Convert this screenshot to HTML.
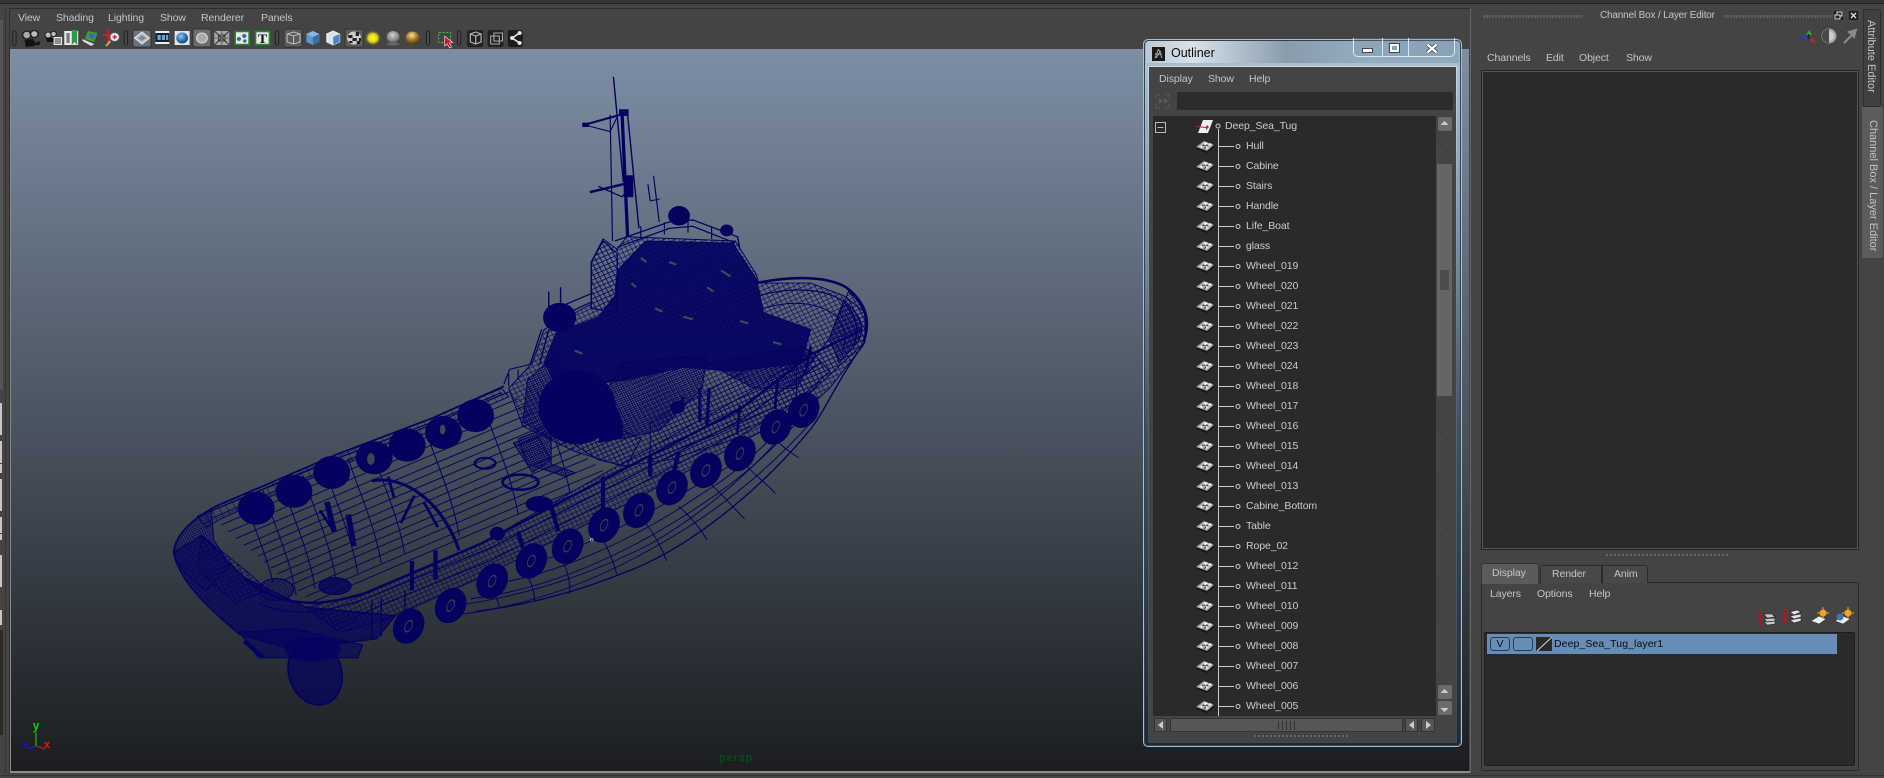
<!DOCTYPE html>
<html><head><meta charset="utf-8"><title>Maya</title>
<style>
html,body{margin:0;padding:0;background:#444;}
#p{position:relative;width:1884px;height:778px;overflow:hidden;background:#444;font:10.5px/14px "Liberation Sans",sans-serif;color:#c2c6ca;letter-spacing:-.1px;}
.a{position:absolute;}
.t{position:absolute;white-space:nowrap;}
.row{position:absolute;left:1246px;white-space:nowrap;line-height:20px;height:20px;color:#c6ccd2;}
.v{writing-mode:vertical-rl;white-space:nowrap;position:absolute;color:#c4c4c4;font-size:11px;letter-spacing:0;}
svg{position:absolute;display:block;}
</style></head><body><div id="p">

<!-- left strip and chrome -->
<div class="a" style="left:0;top:0;width:1884px;height:3px;background:#363636"></div>
<div class="a" style="left:0;top:3px;width:1884px;height:1px;background:#222"></div>
<div class="a" style="left:0;top:20px;width:3px;height:370px;background:#555"></div>
<div class="a" style="left:0;top:403px;width:2px;height:32px;background:#c8c8c8"></div>
<div class="a" style="left:0;top:441px;width:2px;height:22px;background:#c8c8c8"></div>
<div class="a" style="left:0;top:464px;width:2px;height:9px;background:#c8c8c8"></div>
<div class="a" style="left:0;top:479px;width:2px;height:32px;background:#c8c8c8"></div>
<div class="a" style="left:0;top:517px;width:2px;height:16px;background:#c8c8c8"></div>
<div class="a" style="left:0;top:534px;width:2px;height:6px;background:#c8c8c8"></div>
<div class="a" style="left:0;top:555px;width:2px;height:32px;background:#c8c8c8"></div>
<div class="a" style="left:0;top:610px;width:2px;height:15px;background:#c8c8c8"></div>
<div class="a" style="left:0;top:630px;width:3px;height:105px;background:#2a2a2a"></div>
<div class="a" style="left:5px;top:8px;width:1px;height:765px;background:#333"></div>
<div class="a" style="left:9px;top:8px;width:1461px;height:1px;background:#2e2e2e"></div>
<div class="a" style="left:9px;top:8px;width:1px;height:765px;background:#303030"></div>
<div class="a" style="left:1470px;top:8px;width:1px;height:765px;background:#666"></div>

<!-- viewport -->
<div class="a" style="left:11px;top:49px;width:1458px;height:722px;background:linear-gradient(#7d8ea5,#1b1d20)"></div>
<div class="a" style="left:10px;top:49px;width:1px;height:723px;background:#8a8a8a"></div>
<div class="a" style="left:10px;top:771px;width:1460px;height:2px;background:#8c8c8c"></div>
<div class="a" style="left:0;top:775px;width:1884px;height:1px;background:#333"></div>

<!-- menu -->
<span class="t" style="left:18px;top:11px">View</span>
<span class="t" style="left:56px;top:11px">Shading</span>
<span class="t" style="left:108px;top:11px">Lighting</span>
<span class="t" style="left:160px;top:11px">Show</span>
<span class="t" style="left:201px;top:11px">Renderer</span>
<span class="t" style="left:261px;top:11px">Panels</span>

<!-- toolbar -->
<svg style="left:0;top:0" width="560" height="52" viewBox="0 0 560 52">
<defs>
<radialGradient id="gb" cx=".4" cy=".35" r=".7"><stop offset="0" stop-color="#9cc6ee"/><stop offset=".6" stop-color="#2e6fb0"/><stop offset="1" stop-color="#123a66"/></radialGradient>
<radialGradient id="gy"><stop offset="0" stop-color="#ffff30"/><stop offset=".55" stop-color="#d6d610"/><stop offset="1" stop-color="#444" stop-opacity="0"/></radialGradient>
<radialGradient id="gg" cx=".45" cy=".35" r=".7"><stop offset="0" stop-color="#d0d0d0"/><stop offset=".7" stop-color="#808080"/><stop offset="1" stop-color="#444" stop-opacity=".6"/></radialGradient>
<radialGradient id="go" cx=".45" cy=".3" r=".75"><stop offset="0" stop-color="#f6e3a8"/><stop offset=".5" stop-color="#a67a24"/><stop offset="1" stop-color="#3a2a10"/></radialGradient>
</defs>
<g transform="scale(1.0714 1)">
<g fill="#4a4a4a" stroke="#222"><rect x="12" y="31" width="3" height="14" rx="1.5"/><rect x="116" y="31" width="3" height="14" rx="1.5"/><rect x="257" y="31" width="3" height="14" rx="1.5"/><rect x="398" y="31" width="3" height="14" rx="1.5"/><rect x="427" y="31" width="3" height="14" rx="1.5"/></g>
<circle cx="25" cy="35" r="4" fill="#aaa" stroke="#222" stroke-width="1.5"/><circle cx="32" cy="34" r="3.6" fill="#bbb" stroke="#222" stroke-width="1.5"/><path d="M23 40l8-1 2 4 4-2v4l-4 0-1 1-8 1z" fill="#111"/>
<circle cx="45" cy="35" r="3" fill="#bbb" stroke="#222"/><circle cx="50" cy="34" r="2.6" fill="#bbb" stroke="#222"/><path d="M43 38h8v4h-7z" fill="#111"/><rect x="50" y="37" width="8" height="8" fill="#e8e8e8"/><path d="M51 39h6M51 41h6M51 43h6" stroke="#333"/>
<rect x="60" y="31" width="13" height="14" fill="#e8e8e8"/><rect x="62" y="33" width="3" height="10" fill="#777"/><path d="M67 30h5v15l-2.500-3-2.500 3z" fill="#2f9a4c"/>
<path d="M82 31l9 2-3 9-9-3z" fill="#3f9a3a"/><path d="M84 33l5 2-2 4-4-2z" fill="#3b62c0"/><path d="M77 39l11 5-3 2-8-5z" fill="#ddd"/>
<path d="M101 29v14M96 35h11" stroke="#c81f24" stroke-width="2"/><circle cx="107" cy="37" r="4.500" fill="#e8e8e8" stroke="#555"/><path d="M105 37h4M107 35v4" stroke="#c81f24" stroke-width="1.300"/><path d="M103 41l-4 5" stroke="#c9a25a" stroke-width="2"/>
<rect x="124" y="30" width="17" height="17" rx="2" fill="#66727f" stroke="#333"/><path d="M132.500 32l7 6-7 6-7-6z" fill="#b9c1c8" stroke="#e4e4e4"/><path d="M132.500 35l4 3-4 3-4-3z" fill="#7e8a96"/>
<rect x="145" y="31" width="13" height="13" fill="#eee"/><rect x="145" y="33" width="13" height="9" fill="#123"/><rect x="147" y="35" width="3" height="5" fill="#6aa5dc"/><rect x="151" y="35" width="3" height="5" fill="#6aa5dc"/><rect x="155" y="35" width="2" height="5" fill="#6aa5dc"/>
<rect x="163" y="31" width="14" height="14" fill="#e4e4e4"/><circle cx="170" cy="38" r="5.500" fill="url(#gb)"/>
<rect x="180" y="29" width="17" height="18" rx="2" fill="#6c6c6c" stroke="#303030"/><circle cx="188.500" cy="38" r="5" fill="#aaa" stroke="#ddd"/>
<rect x="200" y="31" width="14" height="14" fill="#a8a8a8"/><path d="M200 31l14 14M214 31l-14 14M204 35h6v6h-6z" stroke="#333" fill="none"/><path d="M207 31v14M200 38h14" stroke="#666"/>
<rect x="219.500" y="31.500" width="13" height="13" fill="#e8e8e8" stroke="#1c8a2e" stroke-width="1.500"/><circle cx="223" cy="39" r="2" fill="#2a6aa8"/><circle cx="228" cy="36" r="2" fill="#2a6aa8"/><circle cx="228.500" cy="41" r="1.600" fill="#2a6aa8"/>
<rect x="238.500" y="31.500" width="13" height="13" fill="#e8e8e8" stroke="#1c8a2e" stroke-width="1.500"/><text x="245" y="43" font-family="Liberation Serif,serif" font-size="13" font-weight="700" fill="#111" text-anchor="middle">T</text>
<rect x="265" y="29" width="17" height="18" rx="2" fill="#5b5b5b" stroke="#333"/><path d="M268 34l6-2 6 2v8l-6 2-6-2zM268 34l6 2 6-2M274 36v8" fill="none" stroke="#bbb"/>
<path d="M286 34l6-3 6 3v8l-6 3-6-3z" fill="#5f96cf"/><path d="M292 37l6-3v8l-6 3z" fill="#3c6ea4"/><path d="M286 34l6-3 6 3-6 3z" fill="#8ab6e2"/>
<path d="M305 34l6-3 6 3v8l-6 3-6-3z" fill="#d9e4ee" stroke="#eee"/><path d="M311 37l6-3v8l-6 3z" fill="#4e86c0"/>
<rect x="322" y="29" width="17" height="18" rx="2" fill="#5b5b5b" stroke="#333"/><circle cx="330.500" cy="38" r="6.500" fill="#ccc"/><path d="M325 35h4v3h-4zM332 32h3v4h-3zM329 38h4v3h-4zM335 38h2v3h-2zM326 41h3v2h-3zM333 41h3v3h-3z" fill="#222"/>
<circle cx="348" cy="38" r="8" fill="url(#gy)"/>
<circle cx="367" cy="37" r="6" fill="url(#gg)"/><ellipse cx="367" cy="44" rx="6" ry="1.500" fill="#666"/>
<circle cx="385" cy="38" r="6.500" fill="url(#go)"/>
<rect x="409.500" y="32.500" width="11" height="10" fill="none" stroke="#29d13c" stroke-dasharray="2 1.500"/><path d="M415 36l0 10 2.500-2 2 4 2-1-2-4 3-.5z" fill="#c8202a" stroke="#fff" stroke-width=".5"/>
<rect x="436" y="30" width="15" height="17" rx="2" fill="#222"/><path d="M439 34l5-2 5 2v8l-5 2-5-2zM439 34l5 2 5-2M444 36v8" fill="none" stroke="#b5b5b5" stroke-width="1.100"/>
<rect x="455" y="30" width="15" height="17" rx="2" fill="#222"/><rect x="458" y="36" width="8" height="8" fill="none" stroke="#aaa"/><rect x="461" y="33" width="8" height="8" fill="none" stroke="#aaa"/>
<rect x="474" y="30" width="14" height="17" rx="2" fill="#1c1c1c"/><path d="M485 33l-7 5 7 5" fill="none" stroke="#e6e6e6" stroke-width="1.500"/><circle cx="478" cy="38" r="2" fill="#e6e6e6"/><circle cx="485" cy="33" r="2" fill="#e6e6e6"/><circle cx="485" cy="43" r="2" fill="#e6e6e6"/>
</g>
</svg>

<!-- ship -->
<svg style="left:0;top:0" width="1884" height="778" viewBox="0 0 1884 778">
<defs>
<pattern id="m" width="5" height="5" patternUnits="userSpaceOnUse" patternTransform="rotate(-24)"><path d="M0 0h5M0 0v5" stroke="#03035f" stroke-width="2.800" fill="none"/></pattern>
<pattern id="m2" width="10" height="10" patternUnits="userSpaceOnUse" patternTransform="rotate(-26)"><path d="M0 0h10M0 0v10" stroke="#03035f" stroke-width="2.600" fill="none"/></pattern>
<pattern id="m3" width="16" height="20" patternUnits="userSpaceOnUse" patternTransform="rotate(-26)"><path d="M0 0h16M0 0v20" stroke="#03035f" stroke-width="2.200" fill="none"/></pattern>
<clipPath id="deck"><path d="M120 1075L400 935 600 850 750 775 820 740 990 965 700 1150 460 1265 330 1300 200 1190z"/></clipPath>
<path id="dl" d="M120 1075Q440 920 750 775"/>
<path id="cr" d="M200 1040C215 1100 255 1190 270 1290"/>
<g id="tire"><ellipse rx="31" ry="42" fill="#03035f" transform="rotate(20)"/><ellipse rx="9" ry="17" fill="#333f4d" transform="rotate(20)"/><ellipse rx="5" ry="11" fill="#03035f" transform="rotate(20)"/></g>
<circle id="it" r="38" fill="#03035f"/>
</defs>
<g transform="translate(150 60) scale(.47194 .4209)" fill="none" stroke="#03035f" stroke-width="2.200">
<!-- hull lower -->
<path d="M690 1310C800 1295 900 1265 1000 1220C1150 1160 1300 1010 1390 890C1430 840 1450 770 1515 670" stroke-width="3"/>
<path d="M620 1300C780 1280 930 1225 1060 1150C1200 1060 1320 930 1400 810"/>
<path d="M700 1250C870 1225 1040 1130 1170 1030C1260 970 1340 880 1420 760"/>
<path d="M800 1200C950 1150 1100 1050 1250 950"/>
<path d="M640 1320C860 1290 1010 1200 1140 1110C1250 1030 1330 950 1410 850"/>
<path d="M680 1280C860 1255 1020 1165 1150 1070C1260 990 1340 910 1415 800"/>
<path d="M870 1180C885 1210 890 1240 890 1268M800 1225C810 1250 815 1265 815 1285M730 1270C740 1290 740 1300 740 1300M960 1140C975 1170 985 1205 990 1225M1050 1100C1070 1130 1085 1160 1095 1190M1120 1060C1150 1090 1170 1120 1180 1140M1190 1010C1220 1040 1240 1070 1260 1090M1260 960C1285 990 1310 1010 1325 1030M1325 900C1340 920 1360 935 1375 945"/>
<!-- deck -->
<path d="M50 1170C55 1120 100 1085 140 1060L400 935 600 850 750 775" stroke-width="4"/>
<path d="M100 1085L400 945 600 860 745 790" stroke-width="3"/>
<path d="M100 1085L140 1060 400 935 600 850 745 780 760 800 600 880 400 965 150 1090 120 1110z" fill="url(#m3)"/>
<g clip-path="url(#deck)">
<use href="#dl" transform="translate(12 13)"/><use href="#dl" transform="translate(30 30)"/><use href="#dl" transform="translate(46 46)"/><use href="#dl" transform="translate(62 62)"/><use href="#dl" transform="translate(78 78)"/><use href="#dl" transform="translate(94 90)"/><use href="#dl" transform="translate(108 104)"/><use href="#dl" transform="translate(122 118)"/><use href="#dl" transform="translate(136 132)"/><use href="#dl" transform="translate(150 146)"/><use href="#dl" transform="translate(164 160)"/><use href="#dl" transform="translate(178 172)"/><use href="#dl" transform="translate(194 186)"/><use href="#dl" transform="translate(210 200)"/><use href="#dl" transform="translate(226 212)"/>
<use href="#cr"/><use href="#cr" transform="translate(40 -17)"/><use href="#cr" transform="translate(80 -34)"/><use href="#cr" transform="translate(125 -52)"/><use href="#cr" transform="translate(170 -72)"/><use href="#cr" transform="translate(220 -94)"/><use href="#cr" transform="translate(270 -115)"/><use href="#cr" transform="translate(385 -160)"/><use href="#cr" transform="translate(510 -210)"/><use href="#cr" transform="translate(620 -260)"/>
</g>
<!-- bulwark band -->
<path d="M330 1300L460 1265 700 1150 990 965 1270 790 1400 690 1440 740 1300 880 1000 1060 720 1220 500 1330 400 1360z" fill="url(#m2)"/>
<path d="M200 1230C260 1290 340 1310 460 1265L700 1150 990 980 1250 830 1400 700 1510 640" stroke-width="6"/>
<path d="M230 1290C300 1330 400 1310 500 1260L720 1160 1000 1000 1260 850 1420 720" stroke-width="3"/>
<path d="M400 1340L500 1290 720 1190 1000 1030 1270 870" stroke-width="2.500"/>
<!-- stern -->
<path d="M50 1170C60 1235 120 1300 190 1365L300 1400 480 1375 520 1320 330 1300 200 1230 110 1130z" fill="#03035f" fill-opacity=".45" stroke-width="3"/>
<path d="M50 1170C60 1235 120 1300 190 1365L300 1400 480 1375 520 1320 330 1300 200 1230 110 1130z" fill="url(#m)"/>
<path d="M50 1170C55 1120 100 1085 130 1070L135 1140 170 1200 120 1260C80 1230 55 1200 50 1170z" fill="url(#m)"/>
<path d="M110 1130L200 1210 250 1260 180 1290 100 1210z" fill="url(#m2)"/>
<ellipse cx="268" cy="1258" rx="36" ry="26" fill="url(#m)" stroke-width="3"/>
<ellipse cx="392" cy="1250" rx="34" ry="20" fill="#03035f" fill-opacity=".8" stroke-width="3"/>
<path d="M190 1360L230 1420 300 1420 440 1420 450 1390 300 1350z" fill="#03035f" fill-opacity=".6" stroke-width="3"/>
<path d="M200 1380l40 40" stroke-width="10"/>
<ellipse cx="350" cy="1455" rx="56" ry="78" transform="rotate(-12 350 1455)" fill="#03035f" fill-opacity=".45" stroke-width="4"/>
<ellipse cx="350" cy="1455" rx="56" ry="78" transform="rotate(-12 350 1455)" fill="url(#m)"/>
<ellipse cx="345" cy="1400" rx="60" ry="30" fill="#03035f" fill-opacity=".85" stroke="none"/>
<!-- superstructure -->
<path d="M935 480L960 425 990 450 1010 420 1240 430 1285 510 1290 530 1400 530 1470 560 1515 600 1515 670 1400 790 1240 900 1100 950 1000 965 900 930 790 870 760 780 810 720 835 640 935 580z" fill="url(#m2)"/>
<path d="M1285 530C1350 515 1430 510 1475 540C1510 570 1530 610 1512 670" stroke-width="6"/>
<path d="M1290 560C1350 540 1430 540 1470 575C1495 600 1505 640 1490 680" stroke-width="3"/>
<path d="M1300 590C1360 570 1420 575 1455 610C1470 630 1480 660 1465 700"/>
<path d="M1480 550C1510 580 1530 620 1510 680L1440 780 1400 820 1375 760 1440 660z" fill="url(#m2)"/>
<path d="M1470 570C1500 600 1520 630 1500 670L1460 720 1440 660z" fill="url(#m)"/>
<path d="M990 500L1050 430 1235 435 1285 520 1300 600 1400 640 1380 720 1240 740 1130 730 1010 760 940 770 870 790 835 720 860 650 950 610 985 560z" fill="#03035f" fill-opacity=".92"/>
<path d="M1040 470l12 10M1100 480l15 6M1210 500l20 14M1180 540l14 10M1020 530l10 10M1070 590l16 8M1130 610l20 6M900 690l16 8M1250 620l18 6M1320 670l18 6" stroke="#3b4a5c" stroke-width="5"/>
<path d="M935 480L960 430 990 460 990 600 935 590z" fill="url(#m2)" stroke-width="3"/>
<path d="M1000 720L1180 700 1170 780 1080 880 1000 900 960 800z" fill="url(#m)"/>
<path d="M800 760L860 700 900 800 850 900 790 860z" fill="url(#m)"/>
<ellipse cx="905" cy="825" rx="82" ry="88" fill="#03035f" stroke="none"/>
<path d="M920 770C980 790 1010 840 1000 900L950 910C960 860 950 810 920 770z" fill="#03035f" stroke="none"/>
<path d="M850 870L850 960 900 980 880 990 800 960 780 900z" fill="url(#m)"/>
<path d="M880 900L950 950 1010 965 1040 900 1000 880z" fill="url(#m2)"/>
<path d="M1060 860L1290 720 1370 720 1370 800 1200 890 1060 950z" fill="url(#m2)"/>
<path d="M1180 720L1380 680 1410 700 1370 780 1280 780z" fill="url(#m)"/>
<path d="M1165 780l0 80M1185 780l-5 90M1130 800l-10 40" stroke-width="7"/>
<circle cx="1118" cy="825" r="14" fill="#03035f"/>
<path d="M1400 680l-10 60M1330 760l-6 70M1250 820l-6 70" stroke-width="6"/>
<!-- rails / masts -->
<path d="M985 430L1100 385 1150 380 1245 420 1250 450M990 445L1100 400 1150 395 1240 435" stroke-width="3"/>
<path d="M1040 395v30M1090 385v30M1140 380v30M1190 395v30" stroke-width="2.500"/>
<circle cx="1121" cy="370" r="22" fill="#03035f"/><circle cx="1222" cy="405" r="13" fill="#03035f"/>
<path d="M982 40L1003 290" stroke-width="3"/><path d="M1000 120L1012 420" stroke-width="7"/><path d="M1012 130L1036 400" stroke-width="3"/><path d="M975 130L980 430" stroke-width="2.500"/>
<path d="M920 154L1010 126" stroke-width="5"/><path d="M920 154L975 170 990 135" stroke-width="2.500"/><rect x="917" y="150" width="12" height="8" fill="#03035f"/><rect x="995" y="118" width="18" height="14" fill="#03035f"/>
<path d="M932 314L1022 290" stroke-width="6"/><path d="M950 300L1000 325 1020 300" stroke-width="3"/><rect x="1005" y="275" width="18" height="50" fill="#03035f"/>
<path d="M1067 275L1079 385M1055 295L1060 335M1060 335L1080 330" stroke-width="2.500"/>
<path d="M845 550v50M870 540v60M840 600L935 555M850 620L935 575" stroke-width="3"/><circle cx="868" cy="612" r="34" fill="#03035f"/><path d="M750 770L762 735 810 722M760 745v30M780 735v25" stroke-width="2.500"/>
<path d="M830 640L805 725M845 640L825 725" stroke-width="3"/>
<!-- inner deck items -->
<use href="#it" x="225" y="1065"/><use href="#it" x="305" y="1025"/><use href="#it" x="385" y="980"/><use href="#it" x="475" y="945"/><use href="#it" x="545" y="915"/><use href="#it" x="622" y="885"/><use href="#it" x="690" y="845"/>
<ellipse cx="468" cy="948" rx="8" ry="14" fill="#3a4755" stroke="none"/><ellipse cx="620" cy="878" rx="6" ry="12" fill="#3a4755" stroke="none"/>
<ellipse cx="710" cy="958" rx="22" ry="13" stroke-width="5"/><ellipse cx="785" cy="1003" rx="38" ry="18" stroke-width="6"/>
<path d="M770 910l40 70 40 -30-30 -60z" fill="url(#m)"/>
<path d="M470 1000C540 985 620 1050 655 1165" stroke-width="7"/><path d="M505 990l12 50M560 1035l-28 65M580 1050l30 60" stroke-width="6"/><path d="M375 1050l15 70M420 1080l12 75" stroke-width="12"/><path d="M360 1070l30 50" stroke-width="6"/>
<ellipse cx="825" cy="1055" rx="28" ry="18" fill="#03035f"/><circle cx="736" cy="1125" r="15" fill="#03035f"/>
<path d="M555 1190v70M605 1165v70M960 990v90M1060 940v50M1120 930l-10 50M780 1120l10 40M850 1060l15 60" stroke-width="9"/>
<path d="M470 1285v90M490 1280v90M540 1260v70" stroke-width="3"/>
<!-- tires -->
<use href="#tire" x="1385" y="832"/><use href="#tire" x="1326" y="872"/><use href="#tire" x="1250" y="935"/><use href="#tire" x="1178" y="975"/><use href="#tire" x="1106" y="1016"/><use href="#tire" x="1036" y="1070"/><use href="#tire" x="962" y="1105"/><use href="#tire" x="885" y="1155"/><use href="#tire" x="808" y="1190"/><use href="#tire" x="725" y="1238"/><use href="#tire" x="637" y="1296"/><use href="#tire" x="548" y="1345"/>
<circle cx="936" cy="1140" r="3" stroke="#ddd" stroke-width="1.200"/>
</g>
</svg>

<!-- gnomon & label -->
<svg style="left:0;top:700px" width="80" height="60" viewBox="0 700 80 60">
<path d="M36 746V733" stroke="#0e0" stroke-width="1"/><path d="M36 746l-8 3" stroke="#12d" stroke-width="1"/><path d="M36 746l9 3" stroke="#e11" stroke-width="1"/>
<text x="36" y="730" fill="#0c0" font-family="DejaVu Sans Mono,monospace" font-weight="700" font-size="12" text-anchor="middle">y</text>
<text x="25" y="748" fill="#11d" font-family="DejaVu Sans Mono,monospace" font-weight="700" font-size="11" text-anchor="middle">z</text>
<text x="47" y="748" fill="#e11" font-family="DejaVu Sans Mono,monospace" font-weight="700" font-size="11" text-anchor="middle">x</text>
</svg>
<span class="t" style="left:719px;top:751px;color:#0b4a15;font-weight:700;font-size:11px;letter-spacing:.8px">persp</span>

<!-- outliner window -->
<div class="a" style="left:1143px;top:39px;width:319px;height:708px;box-sizing:border-box;border:1px solid #b0bcc6;border-radius:5px;background:linear-gradient(#8fa9bf 0,#a9c2d6 4%,#7c97ad 25%,#3f5160 55%,#1e2a35 100%);box-shadow:inset 0 0 0 1px #33424e"></div>
<div class="a" style="left:1146px;top:41px;width:313px;height:22px;border-radius:4px 4px 0 0;background:linear-gradient(90deg,#b9c9d5,#d7e2ea 15%,#8a9cac 45%,#94acc0 70%,#8fa9be 100%)"></div>
<div class="a" style="left:1148px;top:66px;width:309px;height:677px;box-sizing:border-box;border:1px solid;border-image:linear-gradient(#c7d6e2,#55697a 45%,#3c4a56) 1;background:#444"></div>
<svg style="left:1152px;top:47px" width="13" height="14" viewBox="0 0 13 14"><rect width="13" height="14" fill="#1a1a1a"/><path d="M6.500 2L3 11M6.500 2L10 11M3 7l7 0M4 11l5-7" stroke="#aaa" fill="none"/></svg>
<span class="t" style="left:1171px;top:46px;color:#0a0a0a;font-size:12.5px;letter-spacing:0">Outliner</span>
<div class="a" style="left:1353px;top:38px;width:102px;height:19px;box-sizing:border-box;border:1px solid #dde7ee;border-top:0;border-radius:0 0 5px 5px;background:rgba(120,145,165,.25)"></div>
<div class="a" style="left:1382px;top:38px;width:1px;height:18px;background:#dde7ee"></div>
<div class="a" style="left:1408px;top:38px;width:1px;height:18px;background:#dde7ee"></div>
<div class="a" style="left:1362px;top:48px;width:9px;height:3px;background:#fff;border:1px solid #445"></div>
<div class="a" style="left:1390px;top:44px;width:9px;height:8px;box-sizing:border-box;border:2px solid #fff;outline:1px solid #445"></div>
<svg style="left:1426px;top:44px" width="12" height="9" viewBox="0 0 12 9"><path d="M1.500 .5l9 8M10.500 .5l-9 8" stroke="#445" stroke-width="3.800"/><path d="M1.500 .5l9 8M10.500 .5l-9 8" stroke="#fff" stroke-width="2.200"/></svg>

<span class="t" style="left:1159px;top:72px">Display</span><span class="t" style="left:1208px;top:72px">Show</span><span class="t" style="left:1249px;top:72px">Help</span>
<svg style="left:1154px;top:93px" width="17" height="17" viewBox="0 0 17 17"><path d="M2 6V2h4M11 2h4v4M15 11v4h-4M6 15H2v-4" fill="none" stroke="#5c5c5c" stroke-dasharray="2 1"/><path d="M5 5l4 3-4 3zM10 5l4 3-4 3z" fill="#5c5c5c"/></svg>
<div class="a" style="left:1177px;top:92px;width:276px;height:18px;background:#2c2c2c;border-radius:2px"></div>
<div class="a" style="left:1153px;top:116px;width:283px;height:600px;background:#2a2a2a"></div>

<!-- vertical scrollbar -->
<div class="a" style="left:1437px;top:117px;width:15px;height:599px;background:#5a5a5a;background-image:repeating-linear-gradient(45deg,#3a3a3a 0 1px,#4e4e4e 1px 2px)"></div>
<div class="a" style="left:1438px;top:117px;width:14px;height:14px;background:#6b6b6b;border-radius:2px"></div>
<div class="a" style="left:1437px;top:164px;width:15px;height:232px;background:#656565"></div>
<div class="a" style="left:1438px;top:685px;width:14px;height:14px;background:#6b6b6b;border-radius:2px"></div>
<div class="a" style="left:1438px;top:701px;width:14px;height:14px;background:#6b6b6b;border-radius:2px"></div>
<svg style="left:1437px;top:117px" width="15" height="600" viewBox="0 0 15 600"><path d="M7.500 4l4 4h-8zM7.500 572l4 4h-8zM7.500 595l4-4h-8z" fill="#ccc"/><rect x="3" y="153" width="9" height="20" fill="#3e3e3e" opacity=".6"/></svg>

<!-- horizontal scrollbar -->
<div class="a" style="left:1154px;top:718px;width:13px;height:14px;background:#565656;border:1px solid #333;box-sizing:border-box"></div>
<div class="a" style="left:1170px;top:718px;width:233px;height:14px;background:#565656;border:1px solid #333;box-sizing:border-box"></div>
<div class="a" style="left:1405px;top:718px;width:13px;height:14px;background:#565656;border:1px solid #333;box-sizing:border-box"></div>
<div class="a" style="left:1421px;top:718px;width:14px;height:14px;background:#565656;border:1px solid #333;box-sizing:border-box"></div>
<svg style="left:1150px;top:718px" width="290" height="14" viewBox="0 0 290 14"><path d="M8 7l5-4v8zM259 7l5-4v8zM276 3l5 4-5 4z" fill="#ccc"/></svg>
<div class="a" style="left:1278px;top:721px;width:18px;height:9px;background:repeating-linear-gradient(90deg,#333 0 1px,transparent 1px 4px)"></div>
<div class="a" style="left:1254px;top:735px;width:94px;height:2px;background:repeating-linear-gradient(90deg,#666 0 2px,transparent 2px 4px)"></div>

<!-- tree -->
<svg style="left:1150px;top:116px" width="110" height="600" viewBox="1150 116 110 600">
<defs><g id="mi"><path d="M-9 1L-1-5 9-1 2 5z" fill="#a8a8a8"/><path d="M-9 1L2 5 9-1 9 1 2 7-9 3z" fill="#161616"/><path d="M-6 1L-3-1-1 0-3 2zM-2-2L0-4 3-3 1-1zM0 2L2 0 4 1 2 3zM3-1L5-3 7-2 5 0z" fill="#f0f0f0"/><path d="M-3 0L0-1M-1 3L1 1M1-1L3 0" stroke="#444" stroke-width="1"/></g>
<g id="br"><path d="M1218 0h16" stroke="#ccc"/><circle cx="1238" cy="0" r="2" fill="#2a2a2a" stroke="#ccc"/></g></defs>
<rect x="1155.500" y="122.500" width="10" height="10" fill="none" stroke="#b8b8b8"/><path d="M1157.500 127.500h6" stroke="#b8b8b8"/>
<path d="M1203 120l10 0-5 13-10 0z" fill="#eee"/><path d="M1196 126l10 1 1-2 2 2-3 3 0-2-10-1z" fill="#d0142a"/>
<circle cx="1218" cy="126" r="2" fill="none" stroke="#ccc"/><path d="M1218.500 129V716" stroke="#ccc"/>
<use href="#mi" x="1205" y="146"/><use href="#br" y="146.500"/><use href="#mi" x="1205" y="166"/><use href="#br" y="166.500"/><use href="#mi" x="1205" y="186"/><use href="#br" y="186.500"/><use href="#mi" x="1205" y="206"/><use href="#br" y="206.500"/><use href="#mi" x="1205" y="226"/><use href="#br" y="226.500"/><use href="#mi" x="1205" y="246"/><use href="#br" y="246.500"/><use href="#mi" x="1205" y="266"/><use href="#br" y="266.500"/><use href="#mi" x="1205" y="286"/><use href="#br" y="286.500"/><use href="#mi" x="1205" y="306"/><use href="#br" y="306.500"/><use href="#mi" x="1205" y="326"/><use href="#br" y="326.500"/><use href="#mi" x="1205" y="346"/><use href="#br" y="346.500"/><use href="#mi" x="1205" y="366"/><use href="#br" y="366.500"/><use href="#mi" x="1205" y="386"/><use href="#br" y="386.500"/><use href="#mi" x="1205" y="406"/><use href="#br" y="406.500"/><use href="#mi" x="1205" y="426"/><use href="#br" y="426.500"/><use href="#mi" x="1205" y="446"/><use href="#br" y="446.500"/><use href="#mi" x="1205" y="466"/><use href="#br" y="466.500"/><use href="#mi" x="1205" y="486"/><use href="#br" y="486.500"/><use href="#mi" x="1205" y="506"/><use href="#br" y="506.500"/><use href="#mi" x="1205" y="526"/><use href="#br" y="526.500"/><use href="#mi" x="1205" y="546"/><use href="#br" y="546.500"/><use href="#mi" x="1205" y="566"/><use href="#br" y="566.500"/><use href="#mi" x="1205" y="586"/><use href="#br" y="586.500"/><use href="#mi" x="1205" y="606"/><use href="#br" y="606.500"/><use href="#mi" x="1205" y="626"/><use href="#br" y="626.500"/><use href="#mi" x="1205" y="646"/><use href="#br" y="646.500"/><use href="#mi" x="1205" y="666"/><use href="#br" y="666.500"/><use href="#mi" x="1205" y="686"/><use href="#br" y="686.500"/><use href="#mi" x="1205" y="706"/><use href="#br" y="706.500"/>
</svg>
<span class="row" style="left:1225px;top:116px">Deep_Sea_Tug</span>
<span class="row" style="top:136px">Hull</span><span class="row" style="top:156px">Cabine</span><span class="row" style="top:176px">Stairs</span><span class="row" style="top:196px">Handle</span><span class="row" style="top:216px">Life_Boat</span><span class="row" style="top:236px">glass</span><span class="row" style="top:256px">Wheel_019</span><span class="row" style="top:276px">Wheel_020</span><span class="row" style="top:296px">Wheel_021</span><span class="row" style="top:316px">Wheel_022</span><span class="row" style="top:336px">Wheel_023</span><span class="row" style="top:356px">Wheel_024</span><span class="row" style="top:376px">Wheel_018</span><span class="row" style="top:396px">Wheel_017</span><span class="row" style="top:416px">Wheel_016</span><span class="row" style="top:436px">Wheel_015</span><span class="row" style="top:456px">Wheel_014</span><span class="row" style="top:476px">Wheel_013</span><span class="row" style="top:496px">Cabine_Bottom</span><span class="row" style="top:516px">Table</span><span class="row" style="top:536px">Rope_02</span><span class="row" style="top:556px">Wheel_012</span><span class="row" style="top:576px">Wheel_011</span><span class="row" style="top:596px">Wheel_010</span><span class="row" style="top:616px">Wheel_009</span><span class="row" style="top:636px">Wheel_008</span><span class="row" style="top:656px">Wheel_007</span><span class="row" style="top:676px">Wheel_006</span><span class="row" style="top:696px">Wheel_005</span>

<!-- right panel -->
<div class="a" style="left:1483px;top:15px;width:100px;height:3px;background:repeating-linear-gradient(90deg,#5e5e5e 0 2px,transparent 2px 3px)"></div>
<div class="a" style="left:1724px;top:15px;width:108px;height:3px;background:repeating-linear-gradient(90deg,#5e5e5e 0 2px,transparent 2px 3px)"></div>
<span class="t" style="left:1600px;top:9px;font-size:10px;letter-spacing:-.18px">Channel Box / Layer Editor</span>
<svg style="left:1800px;top:8px" width="60" height="40" viewBox="1800 8 60 40">
<rect x="1833" y="10" width="11" height="11" rx="2" fill="#222" stroke="#555"/><rect x="1837" y="12" width="5" height="4" fill="none" stroke="#ddd"/><rect x="1835" y="15" width="5" height="4" fill="#222" stroke="#ddd"/>
<rect x="1848" y="10" width="11" height="11" rx="2" fill="#222" stroke="#555"/><path d="M1851 13l5 5M1856 13l-5 5" stroke="#ddd" stroke-width="1.300"/>
<path d="M1809 30l3 5h-6z" fill="#28b030"/><path d="M1808.500 34v5" stroke="#1a1a1a" stroke-width="1.500"/><path d="M1800 38l6-3v6z" fill="#2040c8"/><path d="M1816 43l-3-5 -3 3z" fill="#c82028"/>
<circle cx="1829" cy="36" r="7" fill="#aaa" stroke="#999"/><path d="M1829 29a7 7 0 0 0 0 14z" fill="#4a4a4a"/><path d="M1829 31a5 5 0 0 1 0 10z" fill="#ccc"/>
<path d="M1844 43l10-10M1856 30l-7 2 5 5z" stroke="#8a8a8a" stroke-width="2" fill="#8a8a8a"/>
</svg>
<span class="t" style="left:1487px;top:51px">Channels</span><span class="t" style="left:1546px;top:51px">Edit</span><span class="t" style="left:1579px;top:51px">Object</span><span class="t" style="left:1626px;top:51px">Show</span>
<div class="a" style="left:1481px;top:70px;width:378px;height:480px;box-sizing:border-box;border:1px solid #222;outline:1px solid #555;outline-offset:-2px;background:#2a2a2a"></div>
<div class="a" style="left:1606px;top:554px;width:124px;height:2px;background:repeating-linear-gradient(90deg,#666 0 2px,transparent 2px 4px)"></div>

<div class="a" style="left:1481px;top:582px;width:378px;height:189px;box-sizing:border-box;border:1px solid #2a2a2a;border-radius:2px;background:#444"></div>
<div class="a" style="left:1481px;top:563px;width:58px;height:21px;box-sizing:border-box;background:#5b5b5b;border-radius:3px 3px 0 0;border:1px solid #333;border-bottom:0"></div>
<div class="a" style="left:1540px;top:565px;width:62px;height:18px;box-sizing:border-box;background:#484848;border:1px solid #2a2a2a;border-bottom:0;border-radius:3px 0 0 0"></div>
<div class="a" style="left:1602px;top:565px;width:46px;height:18px;box-sizing:border-box;background:#484848;border:1px solid #2a2a2a;border-bottom:0;border-radius:0 3px 0 0"></div>
<span class="t" style="left:1492px;top:566px">Display</span><span class="t" style="left:1552px;top:567px">Render</span><span class="t" style="left:1614px;top:567px">Anim</span>
<span class="t" style="left:1490px;top:587px">Layers</span><span class="t" style="left:1537px;top:587px">Options</span><span class="t" style="left:1589px;top:587px">Help</span>
<svg style="left:1750px;top:606px" width="105" height="24" viewBox="1750 606 105 24">
<path d="M1760 612l3 4h-2v10h-2v-10h-2z" fill="#c01020"/><path d="M1764 614l8 0 3 3-8 1zM1764 619l11-1 0 3-8 1zM1764 622l11-1 0 3-8 1z" fill="#c8c8c8" stroke="#222" stroke-width=".6"/>
<path d="M1785 623l-3-4h2v-10h2v10h2z" fill="#c01020"/><path d="M1790 612l7-2 4 2-7 3zM1790 616l11-2 0 3-7 2zM1790 620l11-2 0 3-7 2z" fill="#e0e0e0" stroke="#222" stroke-width=".6"/>
<path d="M1811 621l8-5 7 3-7 5z" fill="#eee" stroke="#222" stroke-width=".5"/><circle cx="1823" cy="613" r="3.500" fill="#f5a020"/><path d="M1823 607v12M1817 613h12" stroke="#f5a020"/>
<path d="M1835 621l8-5 7 3-7 5z" fill="#eee" stroke="#222" stroke-width=".5"/><circle cx="1840" cy="617" r="3.500" fill="#3a76b8"/><circle cx="1848" cy="613" r="3.500" fill="#f5a020"/><path d="M1848 607v12M1842 613h12" stroke="#f5a020"/>
</svg>
<div class="a" style="left:1484px;top:632px;width:371px;height:134px;box-sizing:border-box;border:1px solid #1e1e1e;border-radius:2px;background:#2a2a2a"></div>
<div class="a" style="left:1487px;top:634px;width:350px;height:20px;background:#668db5"></div>
<div class="a" style="left:1490px;top:637px;width:20px;height:14px;box-sizing:border-box;border:1px solid #2a3c4e;border-radius:3px;background:#668db5;color:#111;text-align:center;line-height:12px;font-size:10.5px">V</div>
<div class="a" style="left:1513px;top:637px;width:20px;height:14px;box-sizing:border-box;border:1px solid #2a3c4e;border-radius:3px;background:#668db5"></div>
<svg style="left:1536px;top:637px" width="16" height="14" viewBox="0 0 16 14"><rect width="16" height="14" fill="#2a2a2a"/><path d="M1 14L16 0" stroke="#ddd"/></svg>
<span class="t" style="left:1554px;top:637px;color:#0c0c0c;letter-spacing:.08px">Deep_Sea_Tug_layer1</span>

<!-- side tabs -->
<div class="a" style="left:1863px;top:9px;width:18px;height:98px;box-sizing:border-box;background:#404040;border:1px solid #2e2e2e;border-radius:0 3px 3px 0"></div>
<div class="a" style="left:1862px;top:107px;width:21px;height:151px;box-sizing:border-box;background:#5c5c5c;border-radius:0 3px 3px 0"></div>
<span class="v" style="left:1864px;top:20px;line-height:14px">Attribute Editor</span>
<span class="v" style="left:1866px;top:120px;line-height:14px">Channel Box / Layer Editor</span>
</div></body></html>
